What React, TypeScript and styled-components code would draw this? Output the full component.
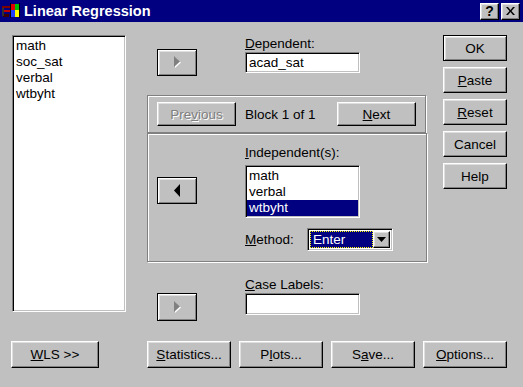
import React from 'react';
import styled, { createGlobalStyle, css } from 'styled-components';

const GlobalStyle = createGlobalStyle`
  body {
    margin: 0;
    background: #c0c0c0;
  }
`;

const font = `"Liberation Sans", Arial, sans-serif`;

const raised = css`
  background: #c0c0c0;
  border: 1px solid;
  border-color: #fff #000 #000 #fff;
  box-shadow: inset -1px -1px #808080, inset 1px 1px #dfdfdf;
`;

const sunken = css`
  border: 1px solid;
  border-color: #808080 #fff #fff #808080;
  box-shadow: inset 1px 1px #000, inset -1px -1px #c0c0c0;
`;

const Window = styled.div`
  width: 523px;
  height: 387px;
  background: #c0c0c0;
  display: flex;
  flex-direction: column;
  font-family: ${font};
  font-size: 13.5px;
  color: #000;
  overflow: hidden;
`;

const TitleBar = styled.div`
  height: 22px;
  background: #000080;
  display: flex;
  align-items: center;
  padding: 0 3px 0 1px;
  box-sizing: border-box;
`;

const Title = styled.div`
  color: #fff;
  font-weight: bold;
  font-size: 14.5px;
  margin-left: 3px;
  flex: 1;
`;

const CaptionButton = styled.div`
  ${raised};
  width: 19px;
  height: 17px;
  box-sizing: border-box;
  display: flex;
  align-items: center;
  justify-content: center;
  font-weight: bold;
  font-size: 14px;
  margin-left: 2px;
`;

const Body = styled.div`
  flex: 1;
  display: flex;
  flex-direction: column;
  padding-top: 13px;
`;

const TopSection = styled.div`
  display: flex;
  align-items: flex-start;
  height: 306px;
`;

const LeftColumn = styled.div`
  margin-left: 12px;
`;

const ListBox = styled.div<{ $w: number; $h: number }>`
  ${sunken};
  background: #fff;
  width: ${(p) => p.$w}px;
  height: ${(p) => p.$h}px;
  box-sizing: border-box;
  padding: 2px 1px;
  overflow: hidden;
`;

const ListItem = styled.div<{ $selected?: boolean }>`
  height: 16px;
  line-height: 16px;
  padding-left: 2px;
  white-space: nowrap;
  background: ${(p) => (p.$selected ? '#000080' : 'transparent')};
  color: ${(p) => (p.$selected ? '#fff' : '#000')};
`;

const Middle = styled.div`
  margin-left: 21px;
  width: 280px;
  display: flex;
  flex-direction: column;
`;

const FieldRow = styled.div<{ $h: number }>`
  display: flex;
  height: ${(p) => p.$h}px;
  padding-left: 10px;
`;

const ArrowButton = styled.div<{ $top: number; $h: number }>`
  ${raised};
  border-color: #000;
  box-shadow: inset 1px 1px #fff, inset -1px -1px #808080, inset 2px 2px #dfdfdf;
  width: 40px;
  height: ${(p) => p.$h}px;
  margin-top: ${(p) => p.$top}px;
  box-sizing: border-box;
  display: flex;
  align-items: center;
  justify-content: center;
  flex-shrink: 0;
`;

const FieldGroup = styled.div<{ $top: number }>`
  margin-left: 48px;
  margin-top: ${(p) => p.$top}px;
  display: flex;
  flex-direction: column;
`;

const Label = styled.div`
  height: 16px;
  line-height: 16px;
  white-space: nowrap;
`;

const LabelGap = styled.div`
  height: 4px;
`;

const TextBox = styled.div<{ $h: number }>`
  ${sunken};
  background: #fff;
  width: 115px;
  height: ${(p) => p.$h}px;
  box-sizing: border-box;
  padding: 0 3px;
  line-height: ${(p) => p.$h - 2}px;
`;

const EtchedPanel = styled.div<{ $h: number; $w: number }>`
  border: 1px solid #808080;
  box-shadow: inset 1px 1px #fff, 1px 1px #fff;
  height: ${(p) => p.$h}px;
  width: ${(p) => p.$w}px;
  box-sizing: border-box;
`;

const BlockRow = styled.div`
  display: flex;
  align-items: center;
  height: 100%;
  padding-left: 9px;
`;

const BlockText = styled.div`
  margin-left: 9px;
  width: 92px;
`;

const PushButton = styled.div<{ $w: number; $h: number; $default?: boolean; $disabled?: boolean }>`
  ${raised};
  width: ${(p) => p.$w}px;
  height: ${(p) => p.$h}px;
  box-sizing: border-box;
  display: flex;
  align-items: center;
  justify-content: center;
  white-space: nowrap;
  flex-shrink: 0;
  color: ${(p) => (p.$disabled ? '#808080' : '#000')};
  text-shadow: ${(p) => (p.$disabled ? '1px 1px #fff' : 'none')};
  ${(p) =>
    p.$default &&
    css`
      border-color: #000;
      box-shadow: inset 1px 1px #fff, inset -1px -1px #808080, inset 2px 2px #dfdfdf;
    `}
`;

const IndependentBody = styled.div`
  display: flex;
  padding-left: 9px;
`;

const MethodRow = styled.div`
  display: flex;
  align-items: center;
  margin-top: 10px;
`;

const MethodLabel = styled.div`
  width: 62px;
`;

const Combo = styled.div`
  ${sunken};
  width: 86px;
  height: 23px;
  box-sizing: border-box;
  background: #fff;
  display: flex;
  padding: 2px;
`;

const ComboValue = styled.div`
  flex: 1;
  background: #000080;
  color: #fff;
  outline: 1px dotted #ffff00;
  outline-offset: -1px;
  padding-left: 3px;
  line-height: 17px;
`;

const ComboDrop = styled.div`
  ${raised};
  width: 17px;
  box-sizing: border-box;
  display: flex;
  align-items: center;
  justify-content: center;
`;

const RightColumn = styled.div`
  margin-left: 16px;
  display: flex;
  flex-direction: column;
  gap: 6px;
`;

const BottomRow = styled.div`
  display: flex;
  gap: 8px;
  padding-left: 11px;
`;

const Spacer = styled.div`
  width: 32px;
`;

const RightArrow = ({ disabled }: { disabled?: boolean }) => (
  <svg width="9" height="13" viewBox="0 0 9 13">
    {disabled && <path d="M2 1 L8 6.5 L2 12 Z" fill="#fff" />}
    <path d="M1 0 L7 5.5 L1 11 Z" fill={disabled ? '#808080' : '#000'} />
  </svg>
);

const LeftArrow = () => (
  <svg width="8" height="13" viewBox="0 0 8 13">
    <path d="M7 0 L1 6.5 L7 13 Z" fill="#000" />
  </svg>
);

const DownArrow = () => (
  <svg width="9" height="5" viewBox="0 0 9 5">
    <path d="M0 0 L9 0 L4.5 5 Z" fill="#000" />
  </svg>
);

const AppIcon = () => (
  <svg width="20" height="18" viewBox="0 0 20 18">
    <rect x="1" y="4" width="8" height="2" fill="#800000" />
    <rect x="1" y="8" width="8" height="2" fill="#c00000" />
    <rect x="2" y="12" width="6" height="3" fill="#400000" />
    <rect x="1" y="6" width="2" height="8" fill="#303030" />
    <rect x="10" y="2" width="4" height="6" fill="#e00000" />
    <rect x="14" y="2" width="4" height="6" fill="#00c000" />
    <rect x="10" y="8" width="4" height="7" fill="#2040ff" />
    <rect x="14" y="8" width="4" height="7" fill="#ffff00" />
    <rect x="9" y="1" width="1" height="15" fill="#000" />
    <rect x="18" y="1" width="1" height="15" fill="#000" />
  </svg>
);

const CloseGlyph = () => (
  <svg width="9" height="8" viewBox="0 0 9 8">
    <path d="M0 0 L2 0 L4.5 3 L7 0 L9 0 L5.5 4 L9 8 L7 8 L4.5 5 L2 8 L0 8 L3.5 4 Z" fill="#000" />
  </svg>
);

export default function App() {
  return (
    <Window>
      <GlobalStyle />
      <TitleBar>
        <AppIcon />
        <Title>Linear Regression</Title>
        <CaptionButton>?</CaptionButton>
        <CaptionButton>
          <CloseGlyph />
        </CaptionButton>
      </TitleBar>
      <Body>
        <TopSection>
          <LeftColumn>
            <ListBox $w={114} $h={277}>
              <ListItem>math</ListItem>
              <ListItem>soc_sat</ListItem>
              <ListItem>verbal</ListItem>
              <ListItem>wtbyht</ListItem>
            </ListBox>
          </LeftColumn>
          <Middle>
            <FieldRow $h={60}>
              <ArrowButton $top={14} $h={27}>
                <RightArrow disabled />
              </ArrowButton>
              <FieldGroup $top={1}>
                <Label>
                  <u>D</u>ependent:
                </Label>
                <TextBox $h={21}>acad_sat</TextBox>
              </FieldGroup>
            </FieldRow>
            <EtchedPanel $h={38} $w={279}>
              <BlockRow>
                <PushButton $w={79} $h={24} $disabled>
                  Pre<u>v</u>ious
                </PushButton>
                <BlockText>Block 1 of 1</BlockText>
                <PushButton $w={79} $h={24}>
                  <u>N</u>ext
                </PushButton>
              </BlockRow>
            </EtchedPanel>
            <EtchedPanel $h={129} $w={280}>
              <IndependentBody>
                <ArrowButton $top={43} $h={27}>
                  <LeftArrow />
                </ArrowButton>
                <FieldGroup $top={11}>
                  <Label>
                    <u>I</u>ndependent(s):
                  </Label>
                  <LabelGap />
                  <ListBox $w={115} $h={53}>
                    <ListItem>math</ListItem>
                    <ListItem>verbal</ListItem>
                    <ListItem $selected>wtbyht</ListItem>
                  </ListBox>
                  <MethodRow>
                    <MethodLabel>
                      <u>M</u>ethod:
                    </MethodLabel>
                    <Combo>
                      <ComboValue>Enter</ComboValue>
                      <ComboDrop>
                        <DownArrow />
                      </ComboDrop>
                    </Combo>
                  </MethodRow>
                </FieldGroup>
              </IndependentBody>
            </EtchedPanel>
            <FieldRow $h={60}>
              <ArrowButton $top={31} $h={28}>
                <RightArrow disabled />
              </ArrowButton>
              <FieldGroup $top={15}>
                <Label>
                  <u>C</u>ase Labels:
                </Label>
                <TextBox $h={22} />
              </FieldGroup>
            </FieldRow>
          </Middle>
          <RightColumn>
            <PushButton $w={64} $h={26} $default>
              OK
            </PushButton>
            <PushButton $w={64} $h={26}>
              <u>P</u>aste
            </PushButton>
            <PushButton $w={64} $h={26}>
              <u>R</u>eset
            </PushButton>
            <PushButton $w={64} $h={26}>
              Cancel
            </PushButton>
            <PushButton $w={64} $h={26}>
              Help
            </PushButton>
          </RightColumn>
        </TopSection>
        <BottomRow>
          <PushButton $w={88} $h={27}>
            <u>W</u>LS &gt;&gt;
          </PushButton>
          <Spacer />
          <PushButton $w={84} $h={27}>
            <u>S</u>tatistics...
          </PushButton>
          <PushButton $w={84} $h={27}>
            P<u>l</u>ots...
          </PushButton>
          <PushButton $w={84} $h={27}>
            S<u>a</u>ve...
          </PushButton>
          <PushButton $w={84} $h={27}>
            <u>O</u>ptions...
          </PushButton>
        </BottomRow>
      </Body>
    </Window>
  );
}
